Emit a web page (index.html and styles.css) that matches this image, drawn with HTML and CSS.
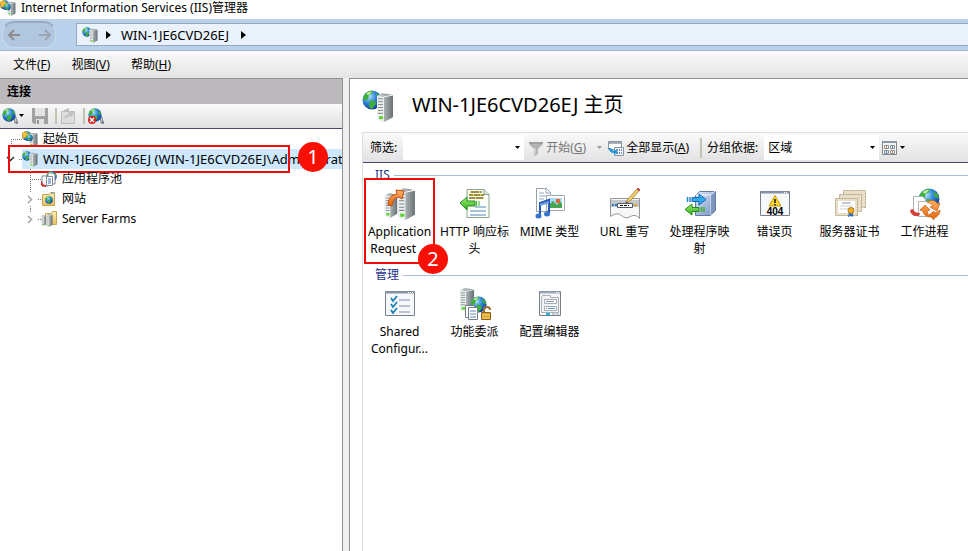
FILE: index.html
```html
<!DOCTYPE html>
<html lang="zh-CN">
<head>
<meta charset="utf-8">
<title>Internet Information Services (IIS)管理器</title>
<link rel="stylesheet" href="styles.css">
</head>
<body>
<svg class="sprite" aria-hidden="true">
  <defs>
    <radialGradient id="g-globe" cx=".35" cy=".3" r=".8"><stop offset="0" stop-color="#b9e6ff"/><stop offset=".45" stop-color="#2f86dc"/><stop offset="1" stop-color="#0b2f8e"/></radialGradient>
    <linearGradient id="g-steel"><stop offset="0" stop-color="#d5dadb"/><stop offset=".5" stop-color="#a3abad"/><stop offset="1" stop-color="#687174"/></linearGradient>
    <linearGradient id="g-green" x2="0" y2="1"><stop offset="0" stop-color="#a4ef72"/><stop offset="1" stop-color="#2fae1c"/></linearGradient>
    <linearGradient id="g-orange" x2="0" y2="1"><stop offset="0" stop-color="#ffb064"/><stop offset="1" stop-color="#e2640c"/></linearGradient>
    <linearGradient id="g-blue" x2="1" y2="1"><stop offset="0" stop-color="#e3ecf9"/><stop offset="1" stop-color="#6f8fc4"/></linearGradient>
    <linearGradient id="g-folder" x2="0" y2="1"><stop offset="0" stop-color="#fff0b4"/><stop offset="1" stop-color="#e8bf5c"/></linearGradient>
    <symbol id="globe" viewBox="0 0 20 20"><circle cx="10" cy="10" r="9.5" fill="url(#g-globe)"/><path d="M3 4Q7 0 11 1L10 4 7 5 6 9 3 11 1 9Q1 6 3 4ZM8 10l5 1 1 3-4 5-3-2ZM14 3l4 3 1 4-4-2Z" fill="#3fae3a"/><path d="M4 4Q7 1 10 2L7 5Z" fill="#c5f3a0"/></symbol>
    <symbol id="tower" viewBox="0 0 18 30" preserveAspectRatio="none"><path d="M1 3 6 0 17 2V25L8 30 1 27Z" fill="url(#g-steel)"/><path d="M1 3 8 4V30L1 27Z" fill="#edf0f0"/><path d="M8 4 17 2" stroke="#f6f8f8"/><path d="M2 6h5M2 9h5M2 12h5M2 15h5M2 18h5M2 21h5" stroke="#7d8789"/><path d="M3 24h4v3H3z" fill="#5bd52f"/></symbol>
    <symbol id="server" viewBox="0 0 32 32"><use href="#globe" width="20" height="20"/><use href="#tower" x="14" y="3" width="18" height="29"/></symbol>
    <symbol id="home" viewBox="0 0 32 32"><use href="#server" width="32" height="32"/><path d="M6 0l3 5 6 0-4 5 2 6-6-3-6 2 1-6-3-5 6-1Z" fill="#ffbe2e" stroke="#d98412"/><use href="#globe" x="7" y="6" width="15" height="15"/></symbol>
    <symbol id="connect" viewBox="0 0 16 16"><path d="M9 9l4 1 1 4 2 1" fill="none" stroke="#75818a" stroke-width="3"/><path d="M9 9l4 1 1 4" fill="none" stroke="#d5dde2"/><use href="#globe" width="14" height="14"/></symbol>
    <symbol id="farm" viewBox="0 0 32 32"><use href="#tower" x="0" y="5" width="14" height="25"/><use href="#tower" x="13" y="0" width="19" height="32"/></symbol>
    <symbol id="page" viewBox="0 0 24 30"><path d="M1 1h17l5 5v23H1z" fill="#fafdf8" stroke="#8ca28c"/><path d="M18 1v5h5" fill="#d9e6d8" stroke="#8ca28c"/></symbol>
    <symbol id="caret" viewBox="0 0 6 4"><path d="M0 0h5L2.5 3Z" fill="currentColor"/></symbol>
  </defs>
</svg>

<header class="titlebar"><svg class="i16"><use href="#home"/></svg><h1>Internet Information Services (IIS)管理器</h1></header>

<nav class="navbar" aria-label="地址">
  <div class="history">
    <button aria-label="后退"><svg width="14" height="12" viewBox="0 0 14 12"><path d="M13 6H2M7 1 2 6l5 5" fill="none" stroke="#8c8d90" stroke-width="2"/></svg></button>
    <button aria-label="前进"><svg width="14" height="12" viewBox="0 0 14 12"><path d="M1 6h11M7 1l5 5-5 5" fill="none" stroke="#9ba5b2" stroke-width="2"/></svg></button>
  </div>
  <div class="address">
    <svg class="i16"><use href="#server"/></svg>
    <svg class="arrow" viewBox="0 0 5 8"><path d="M0 0l5 4-5 4Z"/></svg>
    <a href="#" class="host">WIN-1JE6CVD26EJ</a>
    <svg class="arrow" viewBox="0 0 5 8"><path d="M0 0l5 4-5 4Z"/></svg>
  </div>
</nav>

<nav class="menubar" aria-label="菜单">
  <button>文件(<u>F</u>)</button><button>视图(<u>V</u>)</button><button>帮助(<u>H</u>)</button>
</nav>

<div class="workspace">
  <aside class="connections">
    <h2>连接</h2>
    <div class="tools">
      <button aria-label="连接"><svg class="i16"><use href="#connect"/></svg><svg class="caret"><use href="#caret"/></svg></button>
      <button aria-label="保存"><svg class="i16" viewBox="0 0 16 16"><path d="M0 0h16v16H2l-2-2z" fill="#a1a1a3"/><path d="M3 0h10v8H3zM4 11h8v5H4z" fill="#e4e4e5"/><path d="M5 12h2v4H5z" fill="#929294"/></svg></button>
      <i class="sep"></i>
      <button aria-label="上移"><svg class="i16" viewBox="0 0 16 16"><path d="M1.500 3.500h13v12h-13z" fill="#dedede" stroke="#bcbcbc"/><path d="M4 11Q5 7 9 6L8 3l6 1-2 5-2-1Q7 9 4 11ZM4 2l5-2v3H4z" fill="#c1c1c1"/></svg></button>
      <i class="sep"></i>
      <button aria-label="删除连接"><svg class="i16" viewBox="0 0 16 16"><use href="#connect" width="16" height="16"/><circle cx="4" cy="12" r="4" fill="#d32420"/><path d="M2 10l4 4M6 10l-4 4" stroke="#fff" stroke-width="1.400"/></svg></button>
    </div>
    <ul class="tree">
      <li><svg class="twig" viewBox="0 0 22 20"><path class="dots" d="M11 10.500h11M11.500 10v5"/></svg><svg class="i16"><use href="#home"/></svg><a href="#">起始页</a></li>
      <li class="selected"><svg class="twig" viewBox="0 0 22 20"><path d="M7 8l3.500 3.500L14 8" fill="none" stroke="#333" stroke-width="1.500"/><path class="dots" d="M19 10.500h3"/></svg><div class="hit"><svg class="i16"><use href="#server"/></svg><a href="#" class="host">WIN-1JE6CVD26EJ (WIN-1JE6CVD26EJ\Administrator)</a></div><span class="mark mark-row"></span><span class="badge badge-row">1</span></li>
      <li><svg class="twig deep" viewBox="0 0 41 20"><path class="dots" d="M30.500 0v20M30 10.500h11"/></svg><svg class="i16" viewBox="0 0 16 16"><use href="#globe" x="5" y="0" width="11" height="11"/><path d="M1 5h6v-3h5l2 2v9H7v2H1z" fill="#fff" stroke="#7d8995"/><path d="M5.500 5.500h6v9h-6z" fill="#fff" stroke="#7d8995"/><path d="M7 8h3M7 10h3M7 12h3" stroke="#4971b8"/><path d="M0 10q0 5 5 5" fill="none" stroke="#d6322c" stroke-width="2"/></svg><a href="#">应用程序池</a></li>
      <li><svg class="twig deep" viewBox="0 0 41 20"><path class="dots" d="M30.500 0v4M30.500 17v3M38 10.500h3"/><path d="M28 7l3.500 3.500L28 14" fill="none" stroke="#a6a6a6" stroke-width="1.500"/></svg><svg class="i16" viewBox="0 0 16 16"><path d="M1.500 3.500h7l1-2h4v13h-12z" fill="url(#g-folder)" stroke="#c9a44e"/><path d="M10 2h3" stroke="#4c83c4"/><use href="#globe" x="4" y="5" width="8" height="8"/></svg><a href="#">网站</a></li>
      <li><svg class="twig deep" viewBox="0 0 41 20"><path class="dots" d="M30.500 0v4M38 10.500h3"/><path d="M28 7l3.500 3.500L28 14" fill="none" stroke="#a6a6a6" stroke-width="1.500"/></svg><svg class="i16" viewBox="0 0 16 16"><path d="M4.500 2.500h6l1-2h4v13h-11z" fill="url(#g-folder)" stroke="#c9a44e"/><use href="#tower" x="0" y="4" width="6" height="11"/><use href="#tower" x="5" y="3" width="7" height="13"/></svg><a href="#">Server Farms</a></li>
    </ul>
  </aside>

  <main class="content">
    <div class="heading"><svg class="i32"><use href="#server"/></svg><h2>WIN-1JE6CVD26EJ 主页</h2></div>
    <div class="pane">
      <div class="filterbar">
        <label for="filter">筛选:</label>
        <div class="combo filter"><select id="filter"><option></option></select><svg class="caret"><use href="#caret"/></svg></div>
        <button class="go"><svg class="i16" viewBox="0 0 16 16"><path d="M1 2h14v2l-5 5v5l-4 2V9L1 4z" fill="#b3b3b3"/><path d="M1 3h14" stroke="#8f8f8f"/><path d="M7 8v6" stroke="#e2e2e2"/></svg>开始(<u>G</u>)<svg class="caret"><use href="#caret"/></svg></button>
        <button class="all"><svg class="i16" viewBox="0 0 16 16"><path d="M.500 1.500h13v8H.500z" fill="#fff" stroke="#8b949e"/><path d="M1 3h12" stroke="#a5b0bd" stroke-width="2"/><path d="M6.500 7.500h9v8h-9z" fill="#f4f7fb" stroke="#8b949e"/><path d="M8 10h2m1 0h1m1 0h1M8 13h2m1 0h1m1 0h1" stroke="#426faa" stroke-width="1.500"/><path d="M1 8q0 5 5 5v2l4-3-4-3v2Q4 11 3 8Z" fill="#2198d5"/></svg>全部显示(<u>A</u>)</button>
        <i class="sep"></i>
        <label for="group">分组依据:</label>
        <div class="combo group"><select id="group"><option>区域</option></select><svg class="caret"><use href="#caret"/></svg></div>
        <button class="view" aria-label="视图"><svg class="i16" viewBox="0 0 16 16"><path d="M.500 1.500h14v13H.500z" fill="#f5f5f5" stroke="#85898f"/><path d="M0 2h15" stroke="#8b96a6" stroke-width="2"/><path d="M2.500 5.500h4v3h-4zM8.500 5.500h4v3h-4zM2.500 10.500h4v3h-4zM8.500 10.500h4v3h-4z" fill="#fff" stroke="#858d96"/><path d="M4 7h1M10 12h1" stroke="#d7812d" stroke-width="2"/><path d="M10 7h1M4 12h1" stroke="#3679bd" stroke-width="2"/></svg><svg class="caret"><use href="#caret"/></svg></button>
      </div>

      <section>
        <h3>IIS</h3>
        <div class="features">
          <a href="#" class="feature"><svg class="i32" viewBox="0 0 32 32"><use href="#farm" width="32" height="32"/><path d="M4 17Q4 7 13 6L12 2l8 1-2 8-3-2Q9 9 8 18Z" fill="url(#g-orange)" stroke="#c84d16"/></svg><span>Application Request&nbsp;&nbsp;&nbsp;&nbsp;</span><i class="mark mark-tile"></i><b class="badge badge-tile">2</b></a>
          <a href="#" class="feature"><svg class="i32" viewBox="0 0 32 32"><use href="#page" x="7" y="0" width="24" height="31"/><path d="M11 4h11M10 7h15M10 10h15" stroke="#e7d35a" stroke-width="2"/><path d="M12 4h8m1 0h2M10 7h4m1 0h6m1 0h3M10 10h6m1 0h7" stroke="#554e35"/><path d="M16 19h11M11 23h16M11 27h16" stroke="#5685c1"/><path d="M1 15l7-6v4h8v5H8v4Z" fill="url(#g-green)" stroke="#229021"/><path d="M17.500 13v5M20 13v5" stroke="#40b52f"/></svg><span>HTTP 响应标头</span></a>
          <a href="#" class="feature"><svg class="i32" viewBox="0 0 32 32"><path d="M2.500.500h10l4 4v19h-14z" fill="#fff" stroke="#98a1aa"/><path d="M12 0v5h5M5 5h5M5 8h8M5 11h5" fill="none" stroke="#91a5b9"/><path d="M12.500 7.500h18v15h-18z" fill="#fff" stroke="#a1a9b2"/><path d="M15 10h13v10H15z" fill="#a5dcf5"/><path d="M15 17l4-4 4 4 3-4 2 3v4H15z" fill="#46a653"/><path d="M22 11h4v4h-4z" fill="#e4643f"/><path d="M6 27V15l9-3v13" fill="none" stroke="#2758b5" stroke-width="2"/><path d="M6 17l9-3" stroke="#659ae7" stroke-width="2"/><ellipse cx="4.500" cy="28" rx="3" ry="2.500" fill="#3374cc"/><ellipse cx="13" cy="26" rx="3" ry="2.500" fill="#3374cc"/></svg><span>MIME 类型</span></a>
          <a href="#" class="feature"><svg class="i32" viewBox="0 0 32 32"><path d="M1.500 10.500h29v20q-4-5-9-2t-9-1-11 1z" fill="#f7f7f5" stroke="#949696"/><path d="M2 12h28v7H2z" fill="#c5c8ca"/><path d="M8.500 15.500h15v4h-15z" fill="#fff" stroke="#51575b"/><path d="M11 17.500h9" stroke="#111" stroke-dasharray="3 1"/><path d="M3 17h2m1 0h2" stroke="#2b79c5" stroke-width="2"/><path d="M25 17h3" stroke="#d5a320" stroke-width="2"/><path d="M17 15l2-4 9-10 2 2-9 10z" fill="#f5d26c" stroke="#967430" stroke-width=".8"/><path d="M28 1l1-1 2 2-1 1z" fill="#dc4854" stroke="#c44a50"/><path d="M16.500 15.500l1-2 1 1z" fill="#333"/></svg><span>URL 重写</span></a>
          <a href="#" class="feature"><svg class="i32" viewBox="0 0 32 32"><path d="M11.500 7.500l4-4h16v19l-5 5h-15z" fill="url(#g-blue)" stroke="#647aa0"/><path d="M12 7h15l4-4M27 7v20" fill="none" stroke="#eff5fc"/><path d="M27 7l4-3v18l-4 5z" fill="#7c96c0"/><path d="M8 9.500h7V6l7 5.500-7 5.500v-3.500H8z" fill="#34a8ed" stroke="#1268ae"/><path d="M3.500 9v5M6 9v5" stroke="#2589cd" stroke-width="1.500"/><path d="M15 19.500H8V16l-7 5.500L8 27v-3.500h7z" fill="url(#g-green)" stroke="#218f1b"/><path d="M17.500 19v5M20 19v5" stroke="#3fae2d" stroke-width="1.500"/></svg><span>处理程序映射</span></a>
          <a href="#" class="feature"><svg class="i32" viewBox="0 0 32 32"><path d="M1.500 3.500h29v24h-29z" fill="#f7f8fa" stroke="#788187"/><path d="M2 4.500h28" stroke="#8795ab" stroke-width="2"/><path d="M25 4.500h1m1 0h1" stroke="#fff"/><path d="M16 7.500l6 10.500H10z" fill="#ffd52b" stroke="#cb9c0c"/><path d="M16 11v4M16 16v1.500" stroke="#111" stroke-width="1.500"/><text x="16" y="27" text-anchor="middle" class="code">404</text></svg><span>错误页</span></a>
          <a href="#" class="feature"><svg class="i32" viewBox="0 0 32 32"><g fill="#e9dfc8" stroke="#b0a381" stroke-dasharray="2 1"><path d="M9.500 2.500h22v17h-22z"/><path d="M5.500 6.500h22v17h-22z"/><path d="M1.500 10.500h22v17h-22z"/></g><path d="M4 13h17v12H4z" fill="#fff"/><path d="M8 15h9" stroke="#8394ad"/><path d="M6 18h13M6 21h10" stroke="#ccd1d8"/><path d="M15 24l-1 5 3-1 2 1v-5z" fill="#2b6ccd"/><circle cx="17" cy="22.500" r="3" fill="#edae24" stroke="#b37615"/></svg><span>服务器证书</span></a>
          <a href="#" class="feature"><svg class="i32" viewBox="0 0 32 32"><use href="#globe" x="9" y="0" width="22" height="22"/><path d="M4.500 8.500h9l3 3v16h-12z" fill="#fff" stroke="#acb4b8"/><path d="M9.500 13.500h12v15h-12z" fill="#fff" stroke="#acb4b8"/><path d="M1 22q1 7 9 6l1-3q-6 0-7-4z" fill="#d43d34"/><circle cx="21" cy="22" r="7" fill="#fff"/><path d="M11 22l5-5 5 5-3 1q1 5 4 6-7 0-8-6zM18 14q7-4 11 2l2-1-3 8-7-4 3-1q-2-3-6-4zM31 22q0 6-6 8v2l-5-5 5-4v2q4-1 6-3z" fill="url(#g-orange)" stroke="#c75b0d" stroke-width=".7"/></svg><span>工作进程</span></a>
        </div>
      </section>

      <section>
        <h3>管理</h3>
        <div class="features">
          <a href="#" class="feature"><svg class="i32" viewBox="0 0 32 32"><path d="M1.500 3.500h29v24h-29z" fill="#f6f8fa" stroke="#788187"/><path d="M2 4.500h28" stroke="#8795ab" stroke-width="2"/><path d="M24 4.500h1m1 0h1m1 0h1" stroke="#fff"/><path d="M15 12h11M15 18h11M15 24h11" stroke="#898bab"/><path d="M7 10l2 3 4-5M7 16l2 3 4-5M7 22l2 3 4-5" fill="none" stroke="#1d82b6" stroke-width="1.800"/></svg><span>Shared Configur...</span></a>
          <a href="#" class="feature"><svg class="i32" viewBox="0 0 32 32"><use href="#tower" x="0" y="0" width="16" height="24"/><use href="#globe" x="11" y="8" width="17" height="17"/><path d="M6.500 17.500h9v12h-9z" fill="#fff" stroke="#71808c"/><path d="M9.500 19.500h9v12h-9z" fill="#fff" stroke="#71808c"/><path d="M11 23h6M11 26h6M11 29h6" stroke="#6481bd"/><path d="M25 25v-3q0-3 3-3t3 3" fill="none" stroke="#97702b" stroke-width="2"/><path d="M22.500 24.500h9v7h-9z" fill="#dca936" stroke="#8e6316"/><path d="M23 27h8M23 30h8" stroke="#f4d474"/></svg><span>功能委派</span></a>
          <a href="#" class="feature"><svg class="i32" viewBox="0 0 32 32"><path d="M5.500 3.500h21v24h-21z" fill="#f5f7f9" stroke="#788187"/><path d="M6 4.500h20" stroke="#a0aabd" stroke-width="2"/><path d="M22 4.500h1m1 0h1" stroke="#fff"/><path d="M7.500 9.500v15h17v-15h-8v-2h-8z" fill="#f0f2f3" stroke="#a9b0b6"/><path d="M10.500 11.500h12v4h-12zM10.500 18.500h12v4h-12z" fill="#fff" stroke="#a5acb3"/><path d="M12 13.500h8" stroke="#8097ad"/><path d="M12 20.500h1m1 0h7" stroke="#6198ce"/><path d="M12 26h4" stroke="#18b4e1" stroke-width="2"/><path d="M18 26h3m1 0h3" stroke="#969da5"/></svg><span>配置编辑器</span></a>
        </div>
      </section>
    </div>
  </main>
</div>
</body>
</html>
```
FILE: styles.css
```css
* { box-sizing: border-box; }
body {
  margin: 0;
  height: 100vh;
  display: flex;
  flex-direction: column;
  overflow: hidden;
  background: #f0f0f0;
  color: #000;
  font: 12px/16px "Noto Sans", "Noto Sans CJK SC", sans-serif;
}
h1, h2, h3 { margin: 0; font: inherit; }
a { color: inherit; text-decoration: none; }
button { display: flex; align-items: center; padding: 0; border: 0; background: none; color: inherit; font: inherit; }
svg { flex: none; display: block; }
.sprite { position: absolute; width: 0; height: 0; }
.i16 { width: 16px; height: 16px; }
.i32 { width: 32px; height: 32px; }
.caret { width: 6px; height: 4px; }
.sep { width: 2px; height: 16px; background: #c5c2b2; }
.host { font-size: 13px; }

.titlebar { display: flex; align-items: center; gap: 5px; height: 19px; padding: 0 0 3px; background: #fff; flex: none; }

.navbar { display: flex; align-items: center; gap: 20px; height: 32px; padding-left: 2px; flex: none; background: #b9d1ea; border-bottom: 1px solid #a4b5c9; }
.history { display: flex; align-items: center; justify-content: space-between; width: 54px; height: 27px; padding: 0 3px 0 4px; border: 1px solid #c9dced; border-top: 2px solid #9aabc0; border-radius: 12px; background: #b1c7df; }
.address { display: flex; align-items: center; flex: 1; height: 23px; padding-left: 5px; border: 1px solid #95a9c0; border-right: 0; background: #eaf2fb; }
.address .arrow { width: 5px; height: 8px; margin: 0 10px 0 8px; }
.address a + .arrow { margin-left: 12px; }

.menubar { display: flex; align-items: center; gap: 21px; height: 27px; padding-left: 13px; flex: none; background: linear-gradient(#fbfbfb, #e4e3e4); }

.workspace { display: flex; gap: 6px; flex: 1; min-height: 0; }
.connections { width: 343px; flex: none; display: flex; flex-direction: column; border-top: 1px solid #919191; border-right: 1px solid #919191; background: #fff; }
.connections h2 { height: 25px; padding-left: 7px; line-height: 25px; font-weight: bold; background: #bbb9bc; }
.tools { display: flex; align-items: center; gap: 7px; height: 25px; padding-left: 2px; background: linear-gradient(#fafafa, #e2e1e3); border-bottom: 1px solid #4a4870; }
.tools button { gap: 1px; }
.tools .sep { margin-right: -4px; }

.tree { margin: 0; padding: 0; list-style: none; flex: 1; }
.tree li { position: relative; display: flex; align-items: center; height: 20px; white-space: nowrap; }
.tree a { margin-left: 5px; }
.twig { width: 22px; height: 20px; }
.twig.deep { width: 41px; }
.dots { fill: none; stroke: #777; stroke-dasharray: 1 1; }
.hit { display: flex; align-items: center; flex: 1; min-width: 0; height: 20px; overflow: hidden; background: #cde8ff; }

.mark { position: absolute; border: 2px solid #f10b06; }
.mark-row { left: 8px; top: -4px; width: 282px; height: 28px; }
.mark-tile { left: 2px; right: 2px; top: -10px; height: 86px; }
.badge { position: absolute; width: 30px; height: 30px; border-radius: 50%; background: #f91005; color: #fff; font: 20px/30px "Noto Sans", sans-serif; text-align: center; }
.badge-row { left: 298px; top: -7px; }
.badge-tile { left: 56px; top: 56px; z-index: 1; }

.content { display: flex; flex-direction: column; flex: 1; min-width: 0; padding-left: 12px; border-top: 1px solid #919191; border-left: 1px solid #919191; background: #fff; }
.heading { display: flex; align-items: center; gap: 18px; height: 53px; flex: none; }
.heading h2 { padding-bottom: 2px; font-size: 20px; line-height: 24px; }
.pane { flex: 1; min-height: 0; border-top: 1px solid #dedede; border-left: 1px solid #dedede; }
.filterbar { display: flex; align-items: center; height: 30px; padding-left: 7px; white-space: nowrap; background: linear-gradient(#fafafa, #e2e1e3); border-bottom: 1px solid #4a4870; }
.combo { position: relative; height: 25px; margin-left: 6px; }
.combo select { appearance: none; width: 100%; height: 25px; padding: 0 14px 0 4px; border: 0; border-radius: 0; background: #fff; color: inherit; font: inherit; }
.combo .caret { position: absolute; right: 3px; top: 11px; pointer-events: none; }
.filter { width: 121px; }
.group { width: 115px; }
.go { gap: 0; margin-left: 4px; color: #777; }
.go .caret { margin-left: 11px; color: #999; }
.go .i16, .all .i16 { margin-right: 2px; }
.all { margin-left: 5px; }
.filterbar .sep { height: 20px; margin: 0 5px 0 11px; }
.view { gap: 2px; margin-left: 3px; }

section h3 { display: flex; align-items: center; gap: 4px; height: 16px; margin-top: 4px; padding-left: 12px; color: #1e3287; }
section h3::after { content: ""; flex: 1; height: 1px; background: #aabbdd; }
.features { display: flex; flex-wrap: wrap; margin: 5px 0 0 -1px; }
.feature { position: relative; display: flex; flex-direction: column; align-items: center; gap: 3px; width: 75px; min-height: 75px; padding: 0 2px; line-height: 17px; text-align: center; }
.code { font: bold 10px "Liberation Sans", sans-serif; }
```
